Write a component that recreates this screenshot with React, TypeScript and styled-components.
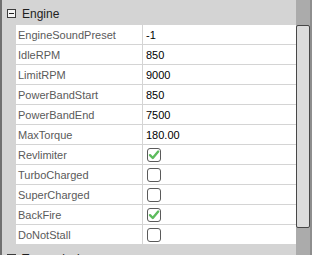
import styled, { createGlobalStyle } from 'styled-components';

type Prop = { name: string; value?: string; checked?: boolean };

const engineProps: Prop[] = [
  { name: 'EngineSoundPreset', value: '-1' },
  { name: 'IdleRPM', value: '850' },
  { name: 'LimitRPM', value: '9000' },
  { name: 'PowerBandStart', value: '850' },
  { name: 'PowerBandEnd', value: '7500' },
  { name: 'MaxTorque', value: '180.00' },
  { name: 'Revlimiter', checked: true },
  { name: 'TurboCharged', checked: false },
  { name: 'SuperCharged', checked: false },
  { name: 'BackFire', checked: true },
  { name: 'DoNotStall', checked: false },
];

const Check = ({ checked }: { checked: boolean }) => (
  <CheckBox>
    {checked && (
      <svg width="12" height="12" viewBox="0 0 12 12">
        <path d="M2 6.2 L4.8 9 L10.2 2.6" fill="none" stroke="#5dbb5d" strokeWidth="2.4" strokeLinecap="round" strokeLinejoin="round" />
      </svg>
    )}
  </CheckBox>
);

const Category = ({ title }: { title: string }) => (
  <Header>
    <Toggle />
    <span>{title}</span>
  </Header>
);

const App = () => (
  <>
    <GlobalStyle />
    <Frame>
      <Grid>
        <Category title="Engine" />
        <Rows>
          {engineProps.map((p) => (
            <Row key={p.name}>
              <Name>{p.name}</Name>
              <Value>
                {p.value !== undefined ? p.value : <Check checked={!!p.checked} />}
              </Value>
            </Row>
          ))}
        </Rows>
        <Category title="Transmission" />
      </Grid>
      <Scrollbar>
        <Thumb />
      </Scrollbar>
    </Frame>
  </>
);

const GlobalStyle = createGlobalStyle`
  body {
    margin: 0;
    overflow: hidden;
    font-family: "Liberation Sans", Arial, sans-serif;
    font-size: 11px;
  }
`;

const Frame = styled.div`
  display: flex;
  width: 312px;
  height: 255px;
  overflow: hidden;
`;

const Grid = styled.div`
  flex: 1;
  display: flex;
  flex-direction: column;
  background: #d4d4d4;
  border-left: 2px solid #707070;
  overflow: hidden;
`;

const Header = styled.div`
  display: flex;
  align-items: center;
  gap: 6px;
  height: 25px;
  flex-shrink: 0;
  padding: 2px 0 0 5px;
  box-sizing: border-box;
  color: #1e1e1e;
  font-size: 12px;
`;

const Toggle = styled.div`
  position: relative;
  width: 9px;
  height: 9px;
  border: 1px solid #3c3c3c;
  box-sizing: border-box;
  background: #f4f4f4;

  &::after {
    content: '';
    position: absolute;
    left: 1px;
    right: 1px;
    top: 3px;
    height: 1px;
    background: #222;
  }
`;

const Rows = styled.div`
  display: flex;
  flex-direction: column;
  margin-left: 14px;
  flex-shrink: 0;
`;

const Row = styled.div`
  display: grid;
  grid-template-columns: 127px 1fr;
  height: 20px;
  border-bottom: 1px solid #d4d4d4;
  box-sizing: border-box;
  background: #fff;
`;

const Name = styled.div`
  display: flex;
  align-items: center;
  padding-left: 2px;
  color: #5a5a5a;
  border-right: 1px solid #d4d4d4;
  white-space: nowrap;
`;

const Value = styled.div`
  display: flex;
  align-items: center;
  padding-left: 3px;
  color: #000;
`;

const CheckBox = styled.div`
  display: flex;
  align-items: center;
  justify-content: center;
  width: 14px;
  height: 14px;
  margin-left: 1px;
  border: 1px solid #5a5a5a;
  border-radius: 3px;
  box-sizing: border-box;
  background: #fff;
`;

const Scrollbar = styled.div`
  width: 16px;
  flex-shrink: 0;
  display: flex;
  flex-direction: column;
  padding-top: 25px;
  box-sizing: border-box;
  background: #ababab;
  border-right: 2px solid #8e8e8e;
`;

const Thumb = styled.div`
  width: 14px;
  height: 203px;
  box-sizing: border-box;
  border: 1px solid #474747;
  border-radius: 2px;
  background: #dcdcdc;
`;

export default App;
